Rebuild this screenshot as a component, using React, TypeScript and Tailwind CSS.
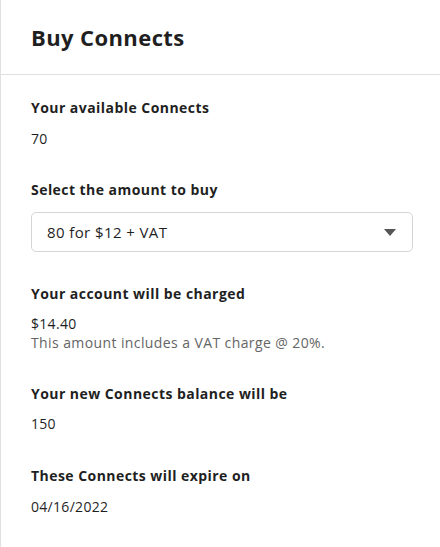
export default function App() {
  const font = { fontFamily: '"Open Sans", "Noto Sans", Arial, sans-serif' };

  return (
    <div className="min-h-[547px] w-[440px] bg-white border-l border-[#e0e0e0] text-[#1f1f1f]" style={font}>
      <div className="h-[75px] border-b border-[#e0e0e0] pl-[30px] pr-[27px] flex items-center">
        <h1 className="text-[22px] font-bold tracking-[0.4px]">Buy Connects</h1>
      </div>

      <div className="pl-[30px] pr-[27px] pt-[23px]">
        <section>
          <div className="text-[14px] font-bold leading-[20px] tracking-[0.45px]">Your available Connects</div>
          <div className="text-[14px] leading-[20px] mt-[11px] tracking-[0.3px]">70</div>
        </section>

        <section className="mt-[31px]">
          <div className="text-[14px] font-bold leading-[20px] tracking-[0.45px]">Select the amount to buy</div>
          <div className="mt-[12px] h-[40px] w-[382px] rounded-[5px] border border-[#d5d5d5] flex items-center justify-between pl-[15px] pr-[15px]">
            <span className="text-[15px] tracking-[0.4px]">80 for $12 + VAT</span>
            <svg width="12" height="7" viewBox="0 0 12 7" className="mr-[1px]">
              <path d="M0 0h12L6 7z" fill="#555" />
            </svg>
          </div>
        </section>

        <section className="mt-[32px]">
          <div className="text-[14px] font-bold leading-[20px] tracking-[0.45px]">Your account will be charged</div>
          <div className="text-[14px] leading-[19px] mt-[10px] tracking-[0.3px]">$14.40</div>
          <div className="text-[14px] leading-[19px] text-[#656565] tracking-[0.4px]">This amount includes a VAT charge @ 20%.</div>
        </section>

        <section className="mt-[32px]">
          <div className="text-[14px] font-bold leading-[20px] tracking-[0.45px]">Your new Connects balance will be</div>
          <div className="text-[14px] leading-[20px] mt-[10px] tracking-[0.3px]">150</div>
        </section>

        <section className="mt-[32px]">
          <div className="text-[14px] font-bold leading-[20px] tracking-[0.45px]">These Connects will expire on</div>
          <div className="text-[14px] leading-[20px] mt-[11px] tracking-[0.3px]">04/16/2022</div>
        </section>
      </div>
    </div>
  );
}
